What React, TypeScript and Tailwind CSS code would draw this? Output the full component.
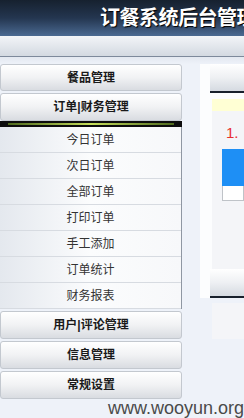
import React from 'react';

const font = "font-['Liberation_Sans','Noto_Sans_CJK_SC',sans-serif]";

const topMenus = ['餐品管理', '订单|财务管理'];
const subItems = ['今日订单', '次日订单', '全部订单', '打印订单', '手工添加', '订单统计', '财务报表'];
const bottomMenus = ['用户|评论管理', '信息管理', '常规设置'];

function MenuButton({ label, h }: { label: string; h: string }) {
  return (
    <div
      className={`${h} flex items-center justify-center rounded-[3px] border border-[#c3c8cf] bg-gradient-to-b from-[#ffffff] via-[#f1f2f4] to-[#d9dce1] text-[12px] font-bold text-[#1a1a1a]`}
    >
      {label}
    </div>
  );
}

export default function App() {
  return (
    <div className={`relative w-[244px] h-[418px] overflow-hidden bg-[#eef2f9] ${font}`}>
      {/* Header */}
      <div className="h-[36px] bg-gradient-to-b from-[#16212f] via-[#243650] to-[#4b6a92] flex items-center pl-[100px] overflow-hidden">
        <span className="whitespace-nowrap text-[20px] font-bold tracking-[-0.5px] text-white [text-shadow:1px_1px_1px_#000]">
          订餐系统后台管理
        </span>
      </div>
      {/* Toolbar band */}
      <div className="h-[21px] bg-gradient-to-b from-[#f3f5f8] to-[#d3d9e1] border-b border-[#7d899b]" />
      <div className="h-[7px] bg-gradient-to-b from-[#e3e8f0] to-[#eef2f9]" />

      {/* Body */}
      <div className="flex">
        {/* Left menu */}
        <div className="w-[182px] flex flex-col">
          <MenuButton label={topMenus[0]} h="h-[27px]" />
          <div className="h-[2px]" />
          <MenuButton label={topMenus[1]} h="h-[28px]" />
          <div className="h-[6px] bg-[#0d0d0d] flex items-center px-[8px]">
            <div className="h-[2px] w-full bg-gradient-to-r from-[#4f6a1e] via-[#c6df5a] to-[#4f6a1e]" />
          </div>
          <div className="border-r border-[#8f97a3] bg-gradient-to-r from-[#e4e8ee] via-[#fbfcfd] to-[#f7f8fa]">
            {subItems.map((s) => (
              <div
                key={s}
                className="h-[26px] flex items-center justify-center border-b border-[#d7dbe1] text-[12px] text-[#333]"
              >
                {s}
              </div>
            ))}
          </div>
          <div className="h-[2px]" />
          <div className="flex flex-col gap-[2px]">
            {bottomMenus.map((m) => (
              <MenuButton key={m} label={m} h="h-[28px]" />
            ))}
          </div>
        </div>

        {/* Right content */}
        <div className="ml-[18px] flex-1 flex flex-col">
          <div className="bg-[#fcfdfe] pl-[10px] h-[205px] flex flex-col">
            <div className="h-[29px] bg-gradient-to-b from-[#ffffff] via-[#eef0f3] to-[#d5dae1] border-b-2 border-[#18202c]" />
            <div className="ml-[2px] mt-[6px] h-[12px] bg-[#ffffd4]" />
            <div className="ml-[2px] flex-1 bg-[#f4f5f8] pt-[14px] pl-[14px]">
              <div className="text-[15px] leading-[16px] text-[#e83030]">1.</div>
              <div className="-ml-[4px] mt-[8px] h-[37px] bg-[#1e8ff5]" />
              <div className="-ml-[4px] h-[15px] border border-t-0 border-[#bfc3c8] bg-white" />
            </div>
          </div>
          <div className="bg-[#fcfdfe] pl-[10px]">
            <div className="h-[29px] bg-gradient-to-b from-[#ffffff] via-[#eef0f3] to-[#d5dae1] border-b-2 border-[#18202c]" />
          </div>
          <div className="ml-[12px] mt-[5px] h-[36px] bg-[#f4f5f8]" />
        </div>
      </div>

      {/* Watermark */}
      <div className="absolute right-0 bottom-[1px] font-['Liberation_Sans',sans-serif] text-[18px] leading-[18px] text-[#4a4a4a]">
        www.wooyun.org
      </div>
    </div>
  );
}
